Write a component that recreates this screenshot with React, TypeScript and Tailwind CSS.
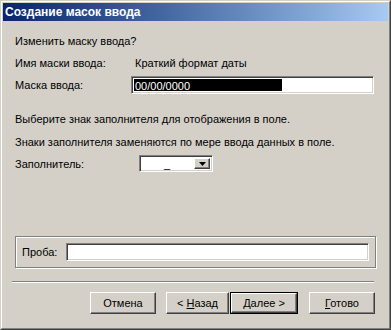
import React from "react";

const raised =
  "border border-t-white border-l-white border-r-[#404040] border-b-[#404040] shadow-[inset_-1px_-1px_0_#808080,inset_1px_1px_0_#d4d0c8]";
const sunken =
  "border border-t-[#808080] border-l-[#808080] border-r-white border-b-white shadow-[inset_1px_1px_0_#404040,inset_-1px_-1px_0_#d4d0c8]";

function Btn({ children, w, isDefault }: { children: React.ReactNode; w: string; isDefault?: boolean }) {
  const inner = (
    <div className={`h-full w-full bg-[#d4d0c8] ${raised} flex items-center justify-center text-[11px] text-black`}>
      {children}
    </div>
  );
  if (isDefault) {
    return <div className={`h-[22px] ${w} border border-black`}>{inner}</div>;
  }
  return <div className={`h-[22px] ${w}`}>{inner}</div>;
}

export default function App() {
  return (
    <div className="w-[391px] h-[330px] font-['Liberation_Sans',Arial,sans-serif] text-[11px] text-black">
      <div className="w-full h-full border border-t-[#d4d0c8] border-l-[#d4d0c8] border-r-[#404040] border-b-[#404040] bg-[#d4d0c8]">
        <div className="w-full h-full border border-t-white border-l-white border-r-[#808080] border-b-[#808080] p-px flex flex-col">
          <div className="h-[18px] shrink-0 bg-gradient-to-r from-[#0a246a] to-[#a6caf0] flex items-center pl-[2px]">
            <span className="text-white font-bold text-[12px] leading-none">Создание масок ввода</span>
          </div>
          <div className="flex flex-col pl-[12px] pr-[14px]">
            <div className="mt-[13px] h-[14px] leading-[14px]">Изменить маску ввода?</div>
            <div className="mt-[8px] h-[14px] leading-[14px] flex">
              <div className="w-[120px]">Имя маски ввода:</div>
              <div>Краткий формат даты</div>
            </div>
            <div className="mt-[6px] h-[18px] flex items-center">
              <div className="w-[116px] leading-[14px]">Маска ввода:</div>
              <div className={`flex-1 h-full bg-white ${sunken} p-[2px] flex`}>
                <div className="w-[148px] h-full bg-black text-white leading-[14px] pl-px">00/00/0000</div>
              </div>
            </div>
            <div className="mt-[18px] h-[14px] leading-[14px]">Выберите знак заполнителя для отображения в поле.</div>
            <div className="mt-[9px] h-[14px] leading-[14px]">Знаки заполнителя заменяются по мере ввода данных в поле.</div>
            <div className="mt-[6px] h-[17px] flex items-center">
              <div className="w-[124px] leading-[14px]">Заполнитель:</div>
              <div className={`w-[74px] h-full bg-white ${sunken} p-[2px] flex items-stretch`}>
                <div className="flex-1 flex items-center justify-center leading-[12px] pr-[2px]">_</div>
                <div className={`w-[16px] bg-[#d4d0c8] ${raised} flex items-center justify-center`}>
                  <svg width="7" height="4" viewBox="0 0 7 4">
                    <path d="M0 0H7L3.5 4Z" fill="#000" />
                  </svg>
                </div>
              </div>
            </div>
            <div className="mt-[64px] h-[32px] w-[361px] border border-[#808080] shadow-[1px_1px_0_#ffffff,inset_1px_1px_0_#ffffff] flex items-center pl-[6px] pr-[6px]">
              <div className="w-[44px] leading-[14px]">Проба:</div>
              <div className={`flex-1 h-[18px] bg-white ${sunken}`}></div>
            </div>
            <div className="mt-[13px] -ml-[3px] h-[2px] border-t border-t-[#808080] border-b border-b-white"></div>
            <div className="mt-[9px] flex">
              <div className="ml-[75px]">
                <Btn w="w-[66px]">Отмена</Btn>
              </div>
              <div className="ml-[10px]">
                <Btn w="w-[63px]">
                  <span>
                    &lt; <span className="underline">Н</span>азад
                  </span>
                </Btn>
              </div>
              <div className="ml-[1px]">
                <Btn w="w-[68px]" isDefault>
                  <span>
                    <span className="underline">Д</span>алее &gt;
                  </span>
                </Btn>
              </div>
              <div className="ml-[11px]">
                <Btn w="w-[66px]">
                  <span>
                    <span className="underline">Г</span>отово
                  </span>
                </Btn>
              </div>
            </div>
          </div>
        </div>
      </div>
    </div>
  );
}
